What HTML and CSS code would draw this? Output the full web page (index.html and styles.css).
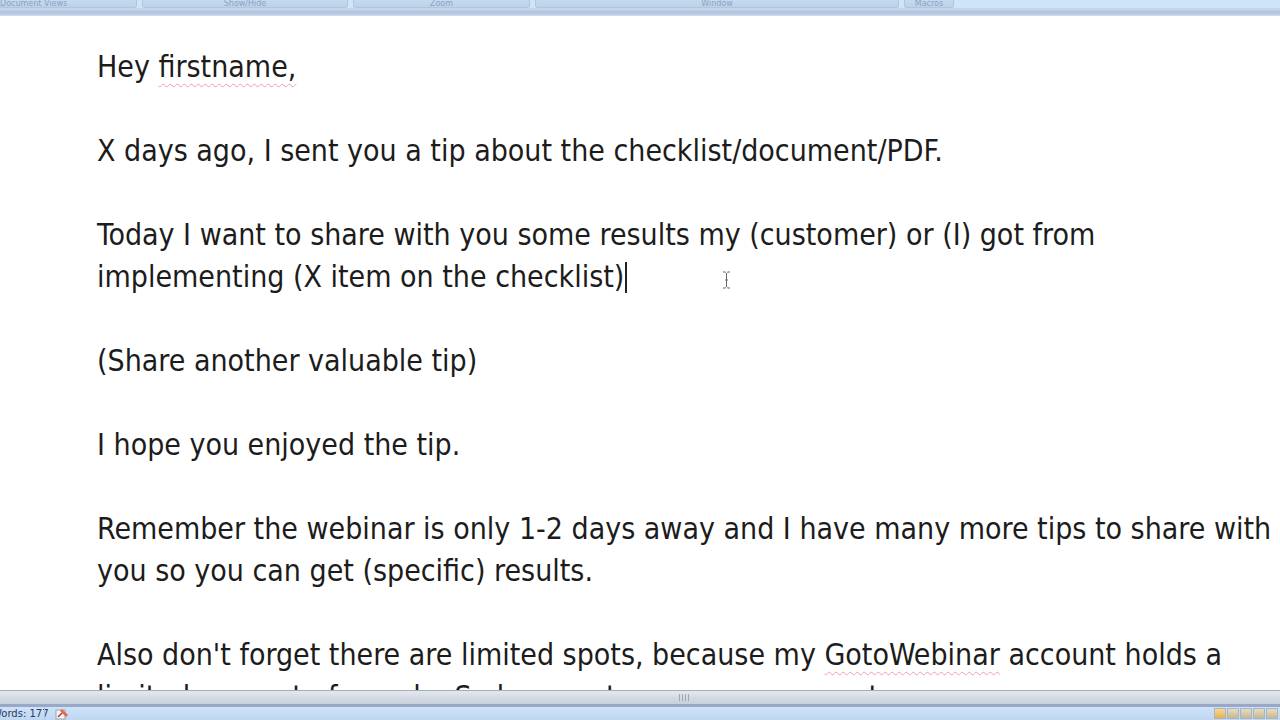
FILE: index.html
```html
<!DOCTYPE html>
<html>
<head>
<meta charset="utf-8">
<link rel="stylesheet" href="styles.css">
</head>
<body>
<div class="app">
  <div class="ribbon">
    <div class="groups">
      <div class="group g1"><span>Document Views</span></div>
      <div class="group g2"><span>Show/Hide</span></div>
      <div class="group g3"><span>Zoom</span></div>
      <div class="group g4"><span>Window</span></div>
      <div class="group g5"><span>Macros</span></div>
    </div>
    <div class="ribbon-base"></div>
  </div>
  <div class="doc">
    <div class="page">
      <p>Hey <span class="sp">firstname,</span></p>
      <p>X days ago, I sent you a tip about the checklist/document/PDF.</p>
      <p>Today I want to share with you some results my (customer) or (I) got from implementing (X item on the checklist)<span class="caret"></span></p>
      <p>(Share another valuable tip)</p>
      <p>I hope you enjoyed the tip.</p>
      <p>Remember the webinar is only 1-2 days away and I have many more tips to share with you so you can get (specific) results.</p>
      <p>Also don't forget there are limited spots, because my <span class="sp">GotoWebinar</span> account holds a limited amount of people. So be sure to reserve your spot.</p>
    </div>
    <svg class="ibeam" width="9" height="18" viewBox="0 0 9 18"><path d="M1 1 H3.5 M5.5 1 H8 M4.5 2 V16 M1 17 H3.5 M5.5 17 H8 M3.5 1.5 L4.5 2.5 L5.5 1.5 M3.5 16.5 L4.5 15.5 L5.5 16.5 M3 9 H6" stroke="#6a6a6a" stroke-width="1" fill="none"/></svg>
  </div>
  <div class="hscroll">
    <div class="thumb"><span class="grip"></span></div>
  </div>
  <div class="status">
    <span class="words">Words: 177</span>
    <span class="sep"></span>
    <span class="proof">
      <svg width="14" height="12" viewBox="0 0 14 12"><rect x="1" y="2" width="9" height="9" fill="#f4f4f4" stroke="#9aa4b4"/><path d="M7 1 L13 7 L11 9 L5 3 Z" fill="#e06a50"/><path d="M3 9 L7 5" stroke="#c03020" stroke-width="1.5"/></svg>
    </span>
    <span class="views">
      <i></i><i></i><i></i><i></i><i></i>
    </span>
  </div>
</div>
</body>
</html>
```
FILE: styles.css
```css
html, body {
  margin: 0;
  padding: 0;
  background: #ffffff;
}
.app {
  width: 1280px;
  height: 720px;
  display: flex;
  flex-direction: column;
  overflow: hidden;
  font-family: "DejaVu Sans Condensed", "DejaVu Sans", sans-serif;
}
.ribbon {
  height: 16px;
  flex: none;
  display: flex;
  flex-direction: column;
  background: #d4e6f8;
}
.groups {
  height: 8px;
  display: flex;
  gap: 5px;
  background: #cfe4f7;
  overflow: hidden;
}
.group {
  height: 7px;
  background: linear-gradient(#c6daef, #bcd2ea);
  border: 1px solid #b0c6de;
  border-top: none;
  border-radius: 0 0 3px 3px;
  font-family: "DejaVu Sans", sans-serif;
  font-size: 8px;
  color: #8ea2bc;
  line-height: 7px;
  display: flex;
  justify-content: center;
  overflow: hidden;
}
.g1 { width: 136px; margin-left: -1px; justify-content: flex-start; }
.g2 { width: 204px; }
.g3 { width: 175px; }
.g4 { width: 362px; }
.g5 { width: 48px; }
.ribbon-base {
  height: 8px;
  background: linear-gradient(#c4d4ea 0, #c4d4ea 25%, #b4c4dc 40%, #b8c8e0 75%, #d8e4f2 100%);
}
.doc {
  flex: 1;
  position: relative;
  overflow: hidden;
  background: #ffffff;
}
.page {
  padding: 30px 0 0 97px;
  width: 1185px;
  font-size: 30px;
  line-height: 42px;
  color: #1c1c1c;
}
.page p {
  margin: 0 0 42px 0;
}
.sp {
  text-decoration: underline wavy #e8a0b0;
  text-decoration-thickness: 1px;
  text-underline-offset: 6px;
}
.caret {
  display: inline-block;
  width: 2px;
  height: 31px;
  background: #222;
  vertical-align: -6px;
  margin-left: 1px;
}
.ibeam {
  position: absolute;
  left: 722px;
  top: 255px;
}
.hscroll {
  height: 17px;
  flex: none;
  border-top: 1px solid #a4acb8;
  background: linear-gradient(#e4e8f0, #d2d8e2 60%, #c8d0dc);
  border-bottom: 3px solid #98a8c6;
  box-sizing: border-box;
  display: flex;
  justify-content: center;
}
.thumb {
  width: 700px;
  display: flex;
  justify-content: center;
  align-items: center;
  margin-left: 90px;
}
.grip {
  width: 12px;
  height: 7px;
  background: repeating-linear-gradient(90deg, #8a92a0 0 1px, transparent 1px 3px);
  opacity: 0.7;
}
.status {
  height: 13px;
  flex: none;
  background: linear-gradient(#cfe2f8, #bfd6f2);
  display: flex;
  align-items: center;
  font-family: "DejaVu Sans", sans-serif;
  font-size: 10px;
  color: #2a3a5a;
}
.words {
  margin-left: -8px;
  width: 52px;
  white-space: nowrap;
}
.sep {
  width: 1px;
  height: 13px;
  background: #aec4e2;
}
.proof {
  margin-left: 10px;
  display: flex;
}
.views {
  margin-left: auto;
  display: flex;
  gap: 1px;
  padding-right: 2px;
}
.views i {
  width: 12px;
  height: 11px;
  background: linear-gradient(#e8dcc0, #c8b890);
  border: 1px solid #a8b4c8;
  box-sizing: border-box;
}
.views i:first-child {
  background: linear-gradient(#f8d890, #e8b050);
}
```
